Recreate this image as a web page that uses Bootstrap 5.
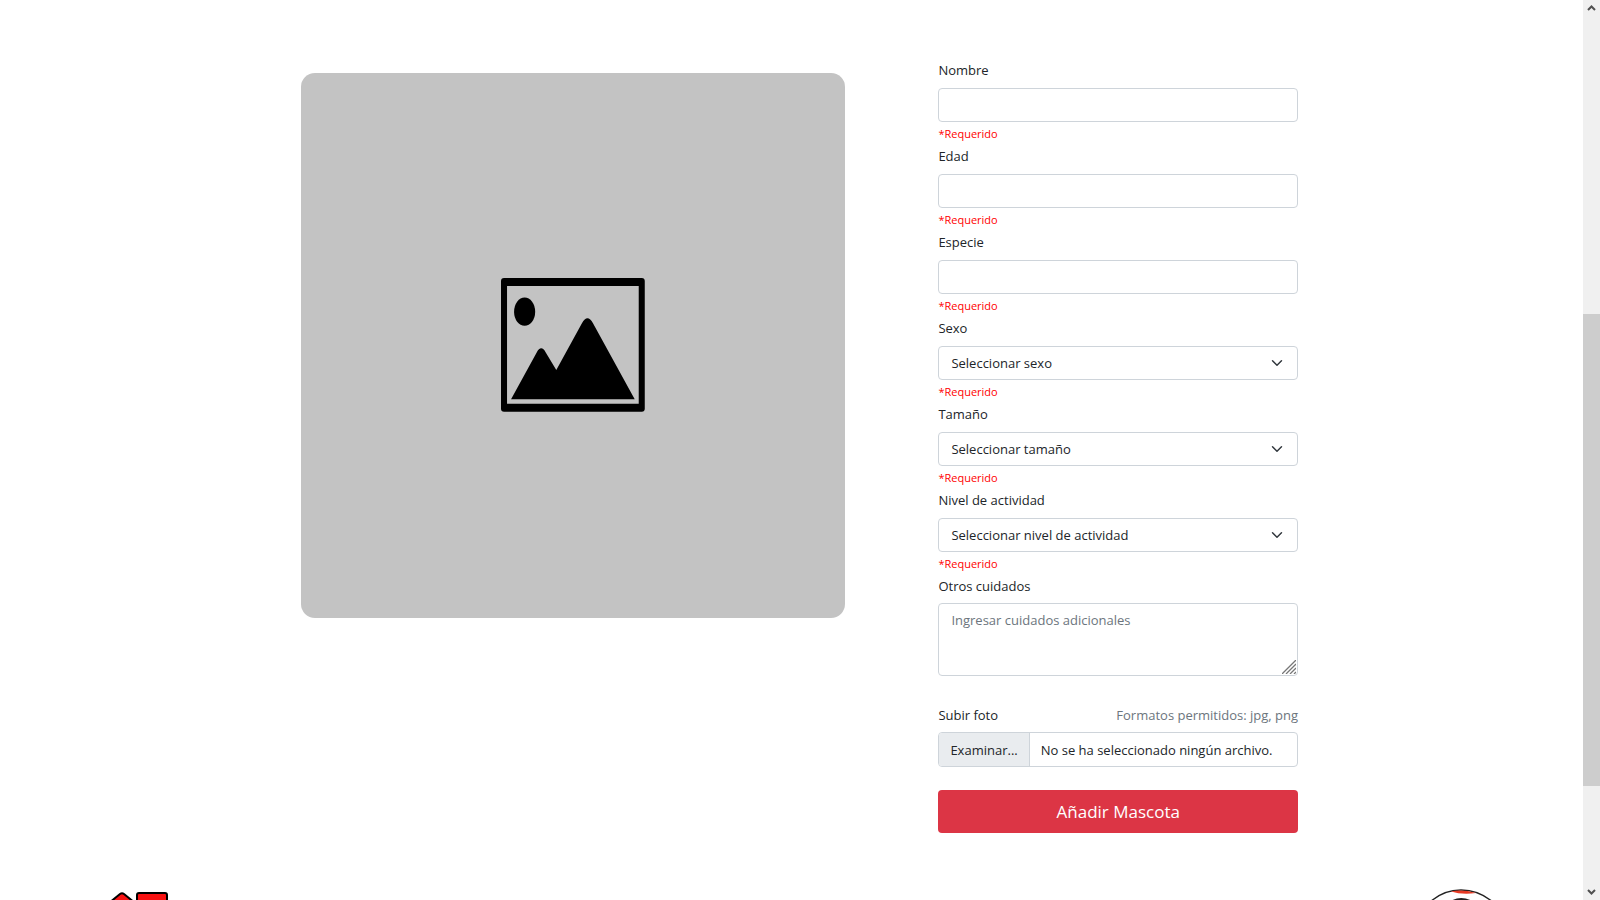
<!DOCTYPE html>
<html lang="es">
<head>
<meta charset="utf-8">
<meta name="viewport" content="width=device-width, initial-scale=1">
<title>Añadir mascota</title>
<link href="https://cdn.jsdelivr.net/npm/bootstrap@5.3.0/dist/css/bootstrap.min.css" rel="stylesheet">
<style>
body{font-family:"Open Sans","Noto Sans",sans-serif;font-size:13px;line-height:22px;color:#212529}
.pet-layout{grid-template-columns:minmax(0,53fr) minmax(0,35fr);gap:93px;padding:59px 18% 56px 19%}
.photo-box{aspect-ratio:1;background:#c3c3c3;border-radius:14px;margin-top:14px}
.photo-box svg{width:26.4%}
.form-label{margin-bottom:7px;display:block}
.label-close{margin-bottom:6px}
.form-control,.form-select{font-size:13px;line-height:22px;padding:5px 12px;height:34px;border-color:#ced4da;border-radius:4px;color:#212529}
.notes-field{margin-bottom:28px}
.notes-field textarea{height:73px;resize:none}
.notes-field svg{position:absolute;right:2px;bottom:2px}
.form-control::placeholder{color:#6c757d;opacity:1}
.required-note{color:red;font-size:11px;line-height:23px}
.file-field{padding:0;height:35px;cursor:pointer}
.file-field .browse{background:#e9ecef;border-right:1px solid #ced4da;padding:6px 11px}
.file-field .file-name{padding:6px 11px}
.send-btn{font-size:17px;line-height:27px;padding:8px;border:0;border-radius:4px;background:#dc3545;margin-top:23px}
.hint{color:#6c757d}
.page-foot{padding:0 5% 0 7%}
.scroll-rail{width:17px;background:#f0f0f0}
.scroll-rail svg{height:17px}
.rail-above{flex:297 0 0}
.rail-thumb{flex:472 0 0;background:#cdcdcd}
.rail-below{flex:97 0 0}
</style>
</head>
<body class="d-flex vh-100 overflow-hidden bg-white">
<div class="flex-grow-1 overflow-hidden">
<main class="pet-layout d-grid align-items-start">
  <div class="photo-box d-flex align-items-center justify-content-center">
    <svg viewBox="0 0 143 133" role="img" aria-label="Imagen">
      <path fill-rule="evenodd" d="M3 0H140Q143 0 143 3V130Q143 133 140 133H3Q0 133 0 130V3Q0 0 3 0ZM6 8V125H137V8Z"/>
      <ellipse cx="23.5" cy="33.5" rx="10.5" ry="14"/>
      <path d="M10 120.500L35.500 74Q40 66 44.500 74L55 91.500L80.500 45Q86 35 91.500 45L133 120.500Z"/>
    </svg>
  </div>
  <form>
    <label class="form-label" for="nombre">Nombre</label>
    <input class="form-control" type="text" id="nombre">
    <div class="required-note">*Requerido</div>
    <label class="form-label" for="edad">Edad</label>
    <input class="form-control" type="text" id="edad">
    <div class="required-note">*Requerido</div>
    <label class="form-label" for="especie">Especie</label>
    <input class="form-control" type="text" id="especie">
    <div class="required-note">*Requerido</div>
    <label class="form-label" for="sexo">Sexo</label>
    <select class="form-select" id="sexo"><option>Seleccionar sexo</option></select>
    <div class="required-note">*Requerido</div>
    <label class="form-label" for="tamano">Tamaño</label>
    <select class="form-select" id="tamano"><option>Seleccionar tamaño</option></select>
    <div class="required-note">*Requerido</div>
    <label class="form-label" for="nivel">Nivel de actividad</label>
    <select class="form-select" id="nivel"><option>Seleccionar nivel de actividad</option></select>
    <div class="required-note">*Requerido</div>
    <label class="form-label label-close" for="cuidados">Otros cuidados</label>
    <div class="notes-field position-relative">
      <textarea class="form-control d-block" id="cuidados" placeholder="Ingresar cuidados adicionales"></textarea>
      <svg width="14" height="14" viewBox="0 0 14 14" aria-hidden="true"><path d="M0 14L14 0M4 14L14 4M8 14L14 8M12 14L14 12" stroke="#777" stroke-width="1.300"/></svg>
    </div>
    <div class="d-flex justify-content-between">
      <label class="form-label label-close" for="foto">Subir foto</label>
      <span class="hint">Formatos permitidos: jpg, png</span>
    </div>
    <div class="position-relative">
      <input class="visually-hidden" type="file" id="foto" accept=".jpg,.png">
      <label class="form-control file-field d-flex overflow-hidden" for="foto"><span class="browse">Examinar...</span><span class="file-name text-nowrap">No se ha seleccionado ningún archivo.</span></label>
    </div>
    <button class="btn btn-danger send-btn w-100" type="submit">Añadir Mascota</button>
  </form>
</main>
<footer class="page-foot d-flex justify-content-between">
  <svg width="60" height="60" viewBox="0 0 60 60" aria-hidden="true">
    <path d="M-2 14L9 5Q11 3.500 13 5L24 14V58H-2Z" fill="#f91212" stroke="#000" stroke-width="2"/>
    <rect x="26" y="4" width="30" height="54" rx="2" fill="#f91212" stroke="#000" stroke-width="2"/>
  </svg>
  <svg width="80" height="80" viewBox="0 0 80 80" aria-hidden="true">
    <path d="M4 15Q18 1 37 1Q56 1 71 15L71 80H4Z" fill="#fff" stroke="#222" stroke-width="1.500"/>
    <path d="M27 2.500Q38 0 52 4Q38 6 27 2.500Z" fill="#e63a24"/>
    <path d="M27 13Q37 7 48 13" fill="#8c2c22" stroke="#222" stroke-width="2"/>
  </svg>
</footer>
</div>
<div class="scroll-rail d-flex flex-column flex-shrink-0" aria-hidden="true">
  <svg viewBox="0 0 17 17"><path d="M5 10L8.500 6.500L12 10" fill="none" stroke="#505050" stroke-width="2"/></svg>
  <div class="rail-above"></div><div class="rail-thumb"></div><div class="rail-below"></div>
  <svg viewBox="0 0 17 17"><path d="M5 7L8.500 10.500L12 7" fill="none" stroke="#505050" stroke-width="2"/></svg>
</div>
<script src="https://cdn.jsdelivr.net/npm/bootstrap@5.3.0/dist/js/bootstrap.bundle.min.js"></script>
</body>
</html>
